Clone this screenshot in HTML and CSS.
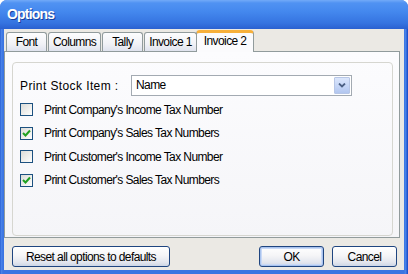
FILE: index.html
```html
<!DOCTYPE html>
<html lang="en">
    <head>
        <meta charset="UTF-8">
        <title>Options</title>
        <link rel="stylesheet" href="styles.css">
    </head>
    <body>
    <div class="window">
        <div class="titlebar">
            <span class="title">Options</span>
        </div>
        <div class="client">
            <div class="tabs">
                <div class="tab">Font</div>
                <div class="tab">Columns</div>
                <div class="tab">Tally</div>
                <div class="tab">Invoice 1</div>
                <div class="tab active">Invoice 2</div>
            </div>
            <div class="panel">
                <div class="group">
                    <div class="field-row">
                        <span class="field-label">Print Stock Item :</span>
                        <div class="combo">
                            <span class="combo-text">Name</span>
                            <span class="combo-drop">
                                <svg width="8" height="5" viewBox="0 0 8 5"><polyline points="1,0.5 4,3.5 7,0.5" fill="none" stroke="#4d6185" stroke-width="1.8"/></svg>
                            </span>
                        </div>
                    </div>
                    <div class="checks">
                        <div class="check-row"><span class="box"></span><span>Print Company's Income Tax Number</span></div>
                        <div class="check-row"><span class="box checked"><svg width="11" height="11" viewBox="0 0 11 11"><polyline points="2,5 4.5,7.5 9,2.5" fill="none" stroke="#21a121" stroke-width="2"/></svg></span><span>Print Company's Sales Tax Numbers</span></div>
                        <div class="check-row"><span class="box"></span><span>Print Customer's Income Tax Number</span></div>
                        <div class="check-row"><span class="box checked"><svg width="11" height="11" viewBox="0 0 11 11"><polyline points="2,5 4.5,7.5 9,2.5" fill="none" stroke="#21a121" stroke-width="2"/></svg></span><span>Print Customer's Sales Tax Numbers</span></div>
                    </div>
                </div>
            </div>
            <div class="buttons">
                <button class="btn btn-reset">Reset all options to defaults</button>
                <span class="spacer"></span>
                <button class="btn btn-default">OK</button>
                <button class="btn">Cancel</button>
            </div>
        </div>
    </div>
    </body>
</html>
```

FILE: styles.css
```css
* {
    box-sizing: border-box;
}
body {
    margin: 0;
    background: #fff;
    font: 12px "Liberation Sans", Arial, sans-serif;
    letter-spacing: -0.6px;
    color: #000;
}
.window {
    width: 408px;
    height: 274px;
    display: flex;
    flex-direction: column;
    border-radius: 7px 7px 0 0;
    overflow: hidden;
    background: linear-gradient(90deg, #1f52cc 0, #4c86ea 1px, #3a74e2 3px, #3a74e2 404px, #4c86ea 406px, #1f52cc 407px);
}
.titlebar {
    height: 29px;
    flex: none;
    display: flex;
    align-items: center;
    padding: 0 7px 1px;
    background: linear-gradient(#72aaf8 0, #5092f2 3px, #4488ee 40%, #3573e0 80%, #2a60d0 100%);
}
.title {
    color: #fff;
    font-weight: bold;
    font-size: 14px;
    letter-spacing: -0.8px;
    text-shadow: 1px 1px #1a3f9c;
}
.client {
    flex: 1;
    margin: 0 4px 4px;
    background: #ebe9e4;
    display: flex;
    flex-direction: column;
}

/* tabs */
.tabs {
    height: 22px;
    flex: none;
    display: flex;
    align-items: flex-end;
    padding-left: 2px;
}
.tab {
    height: 19px;
    min-width: 41px;
    padding: 0 4px;
    margin-right: 1px;
    border: 1px solid #919b9c;
    border-bottom: none;
    border-radius: 3px 3px 0 0;
    background: linear-gradient(#fdfdfe, #f1f2f6 60%, #dfe3ee);
    text-align: center;
    line-height: 18px;
}
.tab.active {
    height: 22px;
    margin: 0 0 -1px -2px;
    padding: 0 7px;
    border-top: 3px solid #f7b03a;
    border-radius: 4px 4px 0 0;
    background: #fbfbfd;
    line-height: 17px;
    position: relative;
    z-index: 1;
}

/* panel */
.panel {
    flex: none;
    height: 187px;
    margin-right: 4px;
    border: 1px solid #919b9c;
    background: linear-gradient(#fcfcfe, #f5f5f8);
    padding: 10px 6px 1px 7px;
}
.group {
    height: 100%;
    border: 1px solid #d6d6d0;
    border-radius: 4px;
    padding: 12px 7px 0;
}
.field-row {
    display: flex;
    align-items: center;
}
.field-label {
    width: 111px;
    flex: none;
    letter-spacing: 0.4px;
}
.combo {
    width: 221px;
    height: 21px;
    display: flex;
    align-items: stretch;
    border: 1px solid #a3aab2;
    background: #fff;
    padding: 1px;
}
.combo-text {
    flex: 1;
    padding-left: 3px;
    line-height: 17px;
}
.combo-drop {
    width: 16px;
    display: flex;
    align-items: center;
    justify-content: center;
    border: 1px solid #b7c6e6;
    border-radius: 1px;
    background: linear-gradient(#dbe6fc, #c3d4f6 60%, #b2c6ef);
}
.checks {
    margin-top: 7px;
    display: flex;
    flex-direction: column;
    gap: 10.6px;
}
.check-row {
    height: 13px;
    display: flex;
    align-items: center;
}
.box {
    width: 13px;
    height: 13px;
    flex: none;
    margin-right: 11px;
    border: 1px solid #1c5180;
    background: linear-gradient(135deg, #dcdcd8, #f4f4f2 70%, #fff);
    display: flex;
    align-items: center;
    justify-content: center;
}

/* buttons */
.buttons {
    flex: none;
    display: flex;
    gap: 8px;
    margin-top: 8px;
    padding: 0 7px 0 8px;
}
.spacer {
    flex: 1;
}
.btn {
    height: 21px;
    width: 65px;
    padding: 0;
    font: inherit;
    letter-spacing: inherit;
    color: #000;
    border: 1px solid #1f4580;
    border-radius: 3px;
    background: linear-gradient(#fff, #f5f5f7 45%, #e3e6ee 80%, #cdd6e6);
}
.btn-reset {
    width: 158px;
}
.btn-default {
    box-shadow: inset 0 0 0 1px #a9c3ee, inset 0 0 0 2px #c9d9f6;
}
```
